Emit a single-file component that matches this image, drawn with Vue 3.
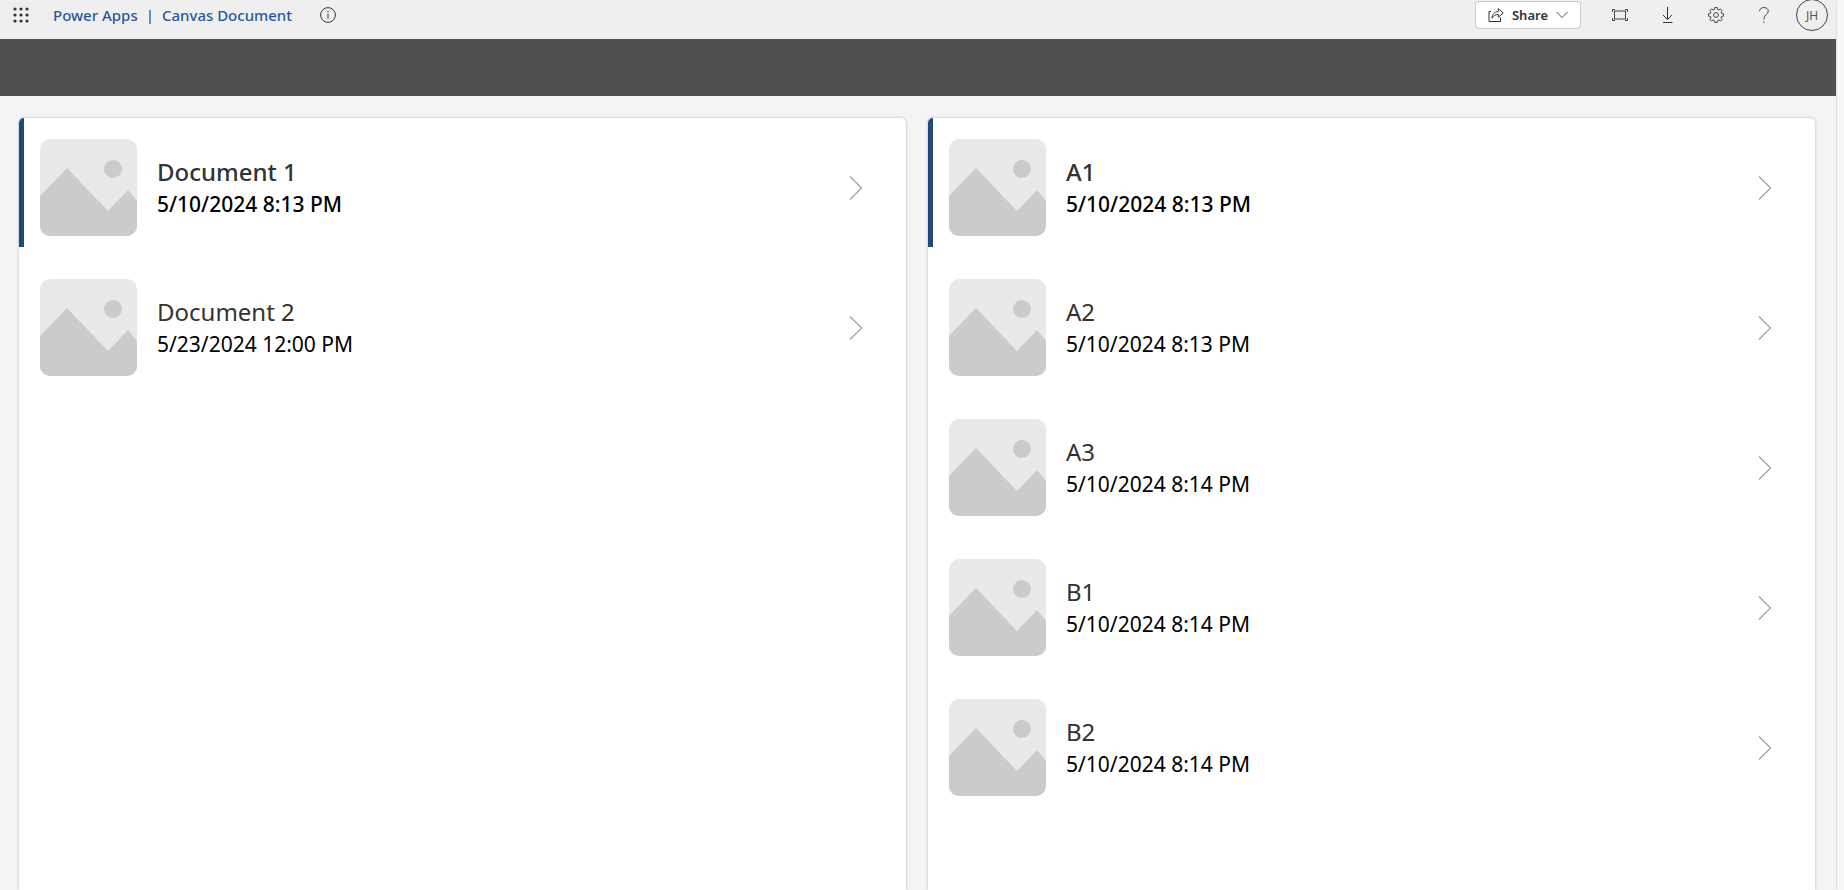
<template>
  <div class="app">
    <div class="screen">
      <header class="header">
        <button class="icon-btn waffle" type="button" aria-label="App launcher">
          <svg width="16" height="16" viewBox="0 0 16 16" fill="#333">
            <template v-for="y in [2, 8, 14]" :key="y">
              <circle v-for="x in [2, 8, 14]" :key="x" :cx="x" :cy="y" r="1.6" />
            </template>
          </svg>
        </button>
        <nav class="crumbs">
          <a href="#">Power Apps</a>
          <span class="sep">|</span>
          <a href="#">Canvas Document</a>
        </nav>
        <button class="icon-btn info" type="button" aria-label="App information">
          <svg width="16" height="16" viewBox="0 0 16 16" fill="none" stroke="#333">
            <circle cx="8" cy="8" r="7.4" />
            <path d="M8 6.5V11.5M8 4v1.4" />
          </svg>
        </button>

        <div class="tools">
          <button class="share" type="button">
            <svg width="16" height="16" viewBox="0 0 16 16" fill="none" stroke="#333">
              <path d="M3 4.5H1V14.5H12.5V10.5" />
              <path d="M4 11.3C4.2 7.4 6.4 4.8 10.3 4.6V1.6L15.2 6 10.3 10.3V7.5C7.4 7.5 5.6 8.6 4 11.3Z" />
            </svg>
            <span>Share</span>
            <svg width="12" height="8" viewBox="0 0 12 8" fill="none" stroke="#555">
              <path d="M.5 1 6 6.5 11.5 1" />
            </svg>
          </button>
          <button class="icon-btn" type="button" aria-label="Fit to screen">
            <svg width="16" height="12" viewBox="0 0 16 12" fill="none" stroke="#4a3b4d">
              <rect x="2.5" y="2" width="11" height="8" />
              <path d="M.5 3V.5H3M13 .5h2.5V3M15.5 9v2.5H13M3 11.5H.5V9" />
            </svg>
          </button>
          <button class="icon-btn" type="button" aria-label="Download">
            <svg width="12" height="16" viewBox="0 0 12 16" fill="none" stroke="#333">
              <path d="M5.5 0v12M1 8l4.5 4.5L10 8M1 15.5h9.5" />
            </svg>
          </button>
          <button class="icon-btn" type="button" aria-label="Settings">
            <svg width="16" height="16" viewBox="0 0 16 16" fill="none" stroke="#444">
              <path :d="gearPath" stroke-linejoin="round" />
              <circle cx="8" cy="8" r="2.4" />
            </svg>
          </button>
          <button class="icon-btn" type="button" aria-label="Help">
            <svg width="10" height="16" viewBox="0 0 10 16" fill="none" stroke="#444">
              <path d="M.6 4.2C.7 1.9 2.4.5 4.9.5S9.3 2 9.3 4.2C9.3 7.4 5 7.6 5 11.5V12.5M5 14.5V16" />
            </svg>
          </button>
          <button class="icon-btn" type="button" aria-label="Account">
            <span class="avatar">JH</span>
          </button>
        </div>
      </header>

      <div class="band"></div>

      <main class="panels">
        <section v-for="(panel, p) in panels" :key="p" class="panel">
          <ul class="gallery">
            <li v-for="item in panel.items" :key="item.title">
              <button
                class="row"
                :class="{ selected: panel.selected === item.title }"
                type="button"
                @click="panel.selected = item.title"
              >
                <svg class="thumb" viewBox="0 0 97 97">
                  <rect width="97" height="97" fill="#e9e9e9" />
                  <path d="M0 57 27 29 68 72 88 51 97 62V97H0Z" fill="#cbcbca" />
                  <circle cx="73" cy="30" r="9" fill="#cbcbca" />
                </svg>
                <span class="text">
                  <span class="title">{{ item.title }}</span>
                  <span class="date">{{ item.date }}</span>
                </span>
                <svg class="chevron" width="14" height="24" viewBox="0 0 14 24" fill="none" stroke="#a2a2a2">
                  <path d="M1 .5 12.5 12 1 23.5" stroke-width="1.3" />
                </svg>
              </button>
            </li>
          </ul>
        </section>
      </main>
    </div>
  </div>
</template>

<script setup>
import { reactive } from 'vue'

const panels = reactive([
  {
    selected: 'Document 1',
    items: [
      { title: 'Document 1', date: '5/10/2024 8:13 PM' },
      { title: 'Document 2', date: '5/23/2024 12:00 PM' }
    ]
  },
  {
    selected: 'A1',
    items: [
      { title: 'A1', date: '5/10/2024 8:13 PM' },
      { title: 'A2', date: '5/10/2024 8:13 PM' },
      { title: 'A3', date: '5/10/2024 8:14 PM' },
      { title: 'B1', date: '5/10/2024 8:14 PM' },
      { title: 'B2', date: '5/10/2024 8:14 PM' }
    ]
  }
])

// eight teeth, four points each
const gearPoint = (radius, degrees) => {
  const a = (degrees * Math.PI) / 180
  return `${(8 + radius * Math.cos(a)).toFixed(2)} ${(8 + radius * Math.sin(a)).toFixed(2)}`
}

const gearPath =
  'M' +
  Array.from({ length: 8 }, (_, i) => i * 45)
    .flatMap(a => [gearPoint(5.8, a - 15), gearPoint(7.6, a - 9), gearPoint(7.6, a + 9), gearPoint(5.8, a + 15)])
    .join('L') +
  'Z'
</script>

<style>
body {
  margin: 0;
  background: #f8f8f8;
}
</style>

<style scoped>
.app {
  min-height: 100vh;
  padding-right: 8px;
  box-sizing: border-box;
  display: flex;
  font-family: 'Segoe UI', 'Noto Sans', 'Open Sans', sans-serif;
}

.screen {
  flex: 1;
  display: flex;
  flex-direction: column;
  background: #f4f4f4;
  box-shadow: 0 0 2px rgba(0, 0, 0, 0.25);
}

button {
  font-family: inherit;
  border: none;
  background: none;
  padding: 0;
  cursor: pointer;
}

.header {
  display: flex;
  align-items: center;
  height: 30px;
  padding: 0 0 9px;
  background: #efefef;
}

.icon-btn {
  width: 48px;
  height: 30px;
  display: flex;
  align-items: center;
  justify-content: center;
}

.waffle {
  width: 41px;
}

.crumbs {
  display: flex;
  margin-left: 12px;
  font-size: 15px;
  font-weight: 500;
  line-height: 30px;
  color: #2b579a;
}

.crumbs a {
  color: inherit;
  text-decoration: none;
}

.sep {
  margin: 0 8px;
}

.info {
  margin-left: 12px;
}

.tools {
  display: flex;
  align-items: center;
  margin-left: auto;
}

.share {
  display: flex;
  align-items: center;
  gap: 8px;
  height: 28px;
  margin-right: 15px;
  padding: 0 12px;
  border: 1px solid #c8c8c8;
  border-radius: 4px;
  background: #fff;
  color: #333;
  font-size: 13px;
  font-weight: 600;
}

.avatar {
  width: 32px;
  height: 32px;
  flex: none;
  box-sizing: border-box;
  border: 1px solid #444;
  border-radius: 50%;
  font-size: 12px;
  line-height: 32px;
  color: #555;
}

.band {
  height: 57px;
  background: #505050;
}

.panels {
  flex: 1;
  display: grid;
  grid-template-columns: 1fr 1fr;
  gap: 22px;
  padding: 22px 21px 0 19px;
}

.panel {
  border-radius: 5px 5px 0 0;
  background: #fff;
  box-shadow: 0 0 3px rgba(0, 0, 0, 0.28);
  overflow: hidden;
}

.gallery {
  display: flex;
  flex-direction: column;
  gap: 11px;
  margin: 0;
  padding: 0;
  list-style: none;
}

.row {
  width: 100%;
  height: 129px;
  box-sizing: border-box;
  display: flex;
  align-items: center;
  padding: 10px 43px 0 16px;
  border-left: 5px solid transparent;
  text-align: left;
}

.row.selected {
  border-left-color: #1f4976;
}

.thumb {
  width: 97px;
  height: 97px;
  border-radius: 10px;
  overflow: hidden;
}

.text {
  flex: 1;
  display: flex;
  flex-direction: column;
  margin-left: 20px;
}

.title {
  font-size: 24px;
  line-height: 32px;
  color: #333;
}

.date {
  font-size: 21px;
  line-height: 32px;
  color: #000;
}

.selected .text {
  font-weight: 500;
}
</style>
